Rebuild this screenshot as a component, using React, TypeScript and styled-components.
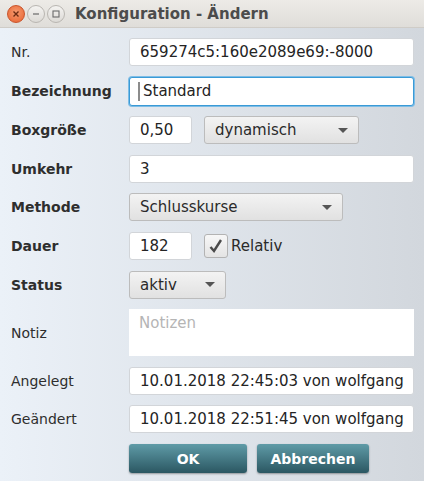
import React from 'react';
import styled, {createGlobalStyle} from "styled-components";

const GlobalStyle = createGlobalStyle`
  html, body {
    margin: 0;
    padding: 0;
    width: 424px;
    height: 481px;
    overflow: hidden;
    font-family: 'DejaVu Sans', 'Noto Sans', sans-serif;
  }
`

type Row = {
    label: string;
    bold?: boolean;
    content: React.ReactNode;
};

export default function App() {
    const rows: Row[] = [
        {label: "Nr.", content: <Field>659274c5:160e2089e69:-8000</Field>},
        {label: "Bezeichnung", bold: true, content: <Field focused><Caret/>Standard</Field>},
        {
            label: "Boxgröße", bold: true, content: (
                <Inline>
                    <Field width={63}>0,50</Field>
                    <Combo width={155}>dynamisch</Combo>
                </Inline>
            )
        },
        {label: "Umkehr", bold: true, content: <Field>3</Field>},
        {label: "Methode", bold: true, content: <Combo width={214}>Schlusskurse</Combo>},
        {
            label: "Dauer", bold: true, content: (
                <Inline>
                    <Field width={63}>182</Field>
                    <CheckLabel>
                        <CheckBox>
                            <svg width="18" height="18" viewBox="0 0 18 18">
                                <path d="M3.5 10 L7 14 L14 3" fill="none" stroke="#4a4a4a" strokeWidth="2.4"/>
                            </svg>
                        </CheckBox>
                        Relativ
                    </CheckLabel>
                </Inline>
            )
        },
        {label: "Status", bold: true, content: <Combo width={97}>aktiv</Combo>},
        {label: "Notiz", content: <TextArea>Notizen</TextArea>},
        {label: "Angelegt", content: <Field>10.01.2018 22:45:03 von wolfgang</Field>},
        {label: "Geändert", content: <Field>10.01.2018 22:51:45 von wolfgang</Field>},
    ];

    return (
        <Window>
            <GlobalStyle/>
            <TitleBar>
                <WinButtons>
                    <CloseBtn>
                        <svg width="8" height="8" viewBox="0 0 8 8">
                            <path d="M1.5 1.5 L6.5 6.5 M6.5 1.5 L1.5 6.5" stroke="#6b2a12" strokeWidth="1.4"/>
                        </svg>
                    </CloseBtn>
                    <GreyBtn>
                        <svg width="8" height="8" viewBox="0 0 8 8">
                            <path d="M1 4 H7" stroke="#6a6a6a" strokeWidth="1.2"/>
                        </svg>
                    </GreyBtn>
                    <GreyBtn>
                        <svg width="8" height="8" viewBox="0 0 8 8">
                            <rect x="1" y="1" width="6" height="6" fill="none" stroke="#6a6a6a" strokeWidth="1.1"/>
                        </svg>
                    </GreyBtn>
                </WinButtons>
                <Title>Konfiguration - Ändern</Title>
            </TitleBar>
            <Body>
                <Form>
                    {rows.map(r => (
                        <React.Fragment key={r.label}>
                            <Label bold={r.bold}>{r.label}</Label>
                            <Cell>{r.content}</Cell>
                        </React.Fragment>
                    ))}
                </Form>
                <Buttons>
                    <ActionButton width={118}>OK</ActionButton>
                    <ActionButton width={112}>Abbrechen</ActionButton>
                </Buttons>
            </Body>
        </Window>
    );
}

const Window = styled.div`
  width: 424px;
  height: 481px;
  display: flex;
  flex-direction: column;
  background: linear-gradient(to right, #ebf1f8, #d2d7dd);
`

const TitleBar = styled.div`
  height: 28px;
  flex: 0 0 28px;
  display: flex;
  align-items: center;
  background: linear-gradient(#edebe7, #dfddd9);
  border-bottom: 1px solid #cfccc7;
  box-sizing: border-box;
`

const WinButtons = styled.div`
  display: flex;
  align-items: center;
  gap: 2px;
  padding-left: 7px;
`

const CloseBtn = styled.div`
  width: 16px;
  height: 16px;
  border-radius: 50%;
  background: radial-gradient(circle at 50% 40%, #f59a70, #e8622f);
  border: 1px solid #c9532a;
  display: flex;
  align-items: center;
  justify-content: center;
`

const GreyBtn = styled.div`
  width: 16px;
  height: 16px;
  border-radius: 50%;
  background: linear-gradient(#f4f3f1, #dcdad6);
  border: 1px solid #b9b6b1;
  display: flex;
  align-items: center;
  justify-content: center;
`

const Title = styled.div`
  margin-left: 10px;
  font-size: 15px;
  font-weight: bold;
  color: #4c4c4c;
`

const Body = styled.div`
  flex: 1;
  padding: 10px 10px 0 11px;
  display: flex;
  flex-direction: column;
`

const Form = styled.div`
  display: grid;
  grid-template-columns: 118px 1fr;
  row-gap: 10.6px;
  align-items: center;
`

const Label = styled.div<{ bold?: boolean }>`
  font-size: 14px;
  font-weight: ${p => (p.bold ? "bold" : "normal")};
  color: #2e2e2e;
`

const Cell = styled.div`
  display: flex;
`

const Inline = styled.div`
  display: flex;
  align-items: center;
  gap: 12px;
`

const Field = styled.div<{ width?: number; focused?: boolean }>`
  box-sizing: border-box;
  width: ${p => (p.width ? `${p.width}px` : "100%")};
  height: ${p => (p.focused ? 29 : 28)}px;
  display: flex;
  align-items: center;
  padding-left: ${p => (p.focused ? 8 : 10)}px;
  background: #fff;
  border: 1px solid ${p => (p.focused ? "#3a9ad6" : "#d2d5d9")};
  box-shadow: ${p => (p.focused ? "0 0 0 1px #7dbde6" : "none")};
  border-radius: 3px;
  font-size: 15px;
  color: #242424;
  white-space: nowrap;
`

const Caret = styled.span`
  display: inline-block;
  width: 2px;
  height: 19px;
  background: #8c8c8c;
  margin-right: 3px;
`

const Combo = styled.div<{ width: number }>`
  box-sizing: border-box;
  width: ${p => p.width}px;
  height: 28px;
  display: flex;
  align-items: center;
  justify-content: space-between;
  padding: 0 10px 0 10px;
  background: linear-gradient(#f3f3f3, #e1e1e1);
  border: 1px solid #bcbcbc;
  border-radius: 3px;
  font-size: 15px;
  color: #2a2a2a;

  &::after {
    content: "";
    border-left: 5px solid transparent;
    border-right: 5px solid transparent;
    border-top: 5px solid #555;
  }
`

const CheckLabel = styled.div`
  display: flex;
  align-items: center;
  gap: 3px;
  font-size: 15px;
  color: #2a2a2a;
`

const CheckBox = styled.div`
  box-sizing: border-box;
  width: 24px;
  height: 24px;
  display: flex;
  align-items: center;
  justify-content: center;
  background: linear-gradient(#f7f7f7, #e4e4e4);
  border: 1px solid #b3b3b3;
  border-radius: 3px;
`

const TextArea = styled.div`
  box-sizing: border-box;
  width: 100%;
  height: 47px;
  padding: 5px 10px;
  background: #fff;
  font-size: 15px;
  color: #b5b5b5;
`

const Buttons = styled.div`
  display: flex;
  gap: 10px;
  margin-top: 11px;
  padding-left: 118px;
`

const ActionButton = styled.div<{ width: number }>`
  width: ${p => p.width}px;
  height: 29px;
  display: flex;
  align-items: center;
  justify-content: center;
  background: linear-gradient(#5f9ba7, #2b5762);
  border-radius: 3px;
  box-shadow: 0 1px 2px rgba(0, 0, 0, 0.35);
  color: #fff;
  font-size: 14px;
  font-weight: bold;
`
